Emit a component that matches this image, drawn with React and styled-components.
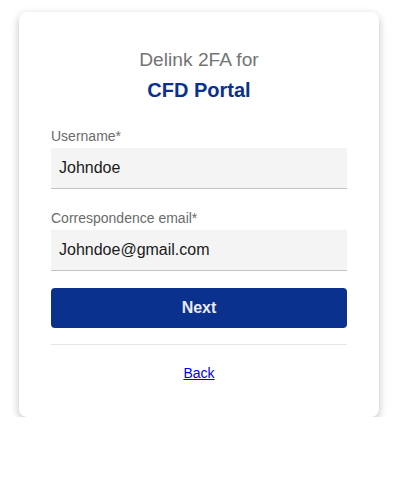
import React from "react"
import styled, { createGlobalStyle } from "styled-components"

const navy = "#0b318f"

const GlobalStyle = createGlobalStyle`
  html, body {
    margin: 0;
    padding: 0;
    background: #ffffff;
    font-family: "Liberation Sans", Arial, sans-serif;
  }
`

const Page = styled.div`
  display: flex;
  justify-content: center;
  padding: 12px 21px 0 19px;
`

const Card = styled.div`
  width: 360px;
  box-sizing: border-box;
  padding: 33px 32px 36px;
  background: #ffffff;
  border-radius: 8px;
  box-shadow: 0 3px 8px rgba(0, 0, 0, 0.25);
`

const Title = styled.h1`
  margin: 0 0 23px;
  text-align: center;
  font-weight: normal;
  font-size: 19.2px;
  line-height: 30px;
  color: #747474;
`

const Brand = styled.span`
  display: block;
  font-size: 20px;
  font-weight: bold;
  color: ${navy};
`

const Field = styled.div`
  display: flex;
  flex-direction: column;
  margin-bottom: ${p => p.$last ? "17px" : "21px"};
`

const Label = styled.label`
  font-size: 14px;
  line-height: 16px;
  color: #6b6b6b;
  margin-bottom: 4px;
`

const Input = styled.input`
  height: 41px;
  box-sizing: border-box;
  border: none;
  border-bottom: 1px solid #c3c3c3;
  background: #f4f4f4;
  padding: 0 8px;
  font-family: inherit;
  font-size: 16px;
  color: #1a1a1a;
  outline: none;
`

const Button = styled.button`
  width: 100%;
  height: 40px;
  border: none;
  border-radius: 4px;
  background: ${navy};
  color: #ebebf2;
  font-family: inherit;
  font-size: 16px;
  font-weight: bold;
  cursor: pointer;
`

const Divider = styled.hr`
  border: none;
  border-top: 1px solid #e6e6e6;
  margin: 16px 0 20px;
`

const Footer = styled.div`
  text-align: center;
  font-size: 14px;
  line-height: 16px;
`

const BackLink = styled.a`
  color: #0000ee;
  text-decoration: underline;
`

export default function App() {
  return (
    <>
      <GlobalStyle />
      <Page>
        <Card>
          <Title>
            Delink 2FA for
            <Brand>CFD Portal</Brand>
          </Title>
          <Field>
            <Label>Username*</Label>
            <Input defaultValue="Johndoe" />
          </Field>
          <Field $last>
            <Label>Correspondence email*</Label>
            <Input defaultValue="Johndoe@gmail.com" />
          </Field>
          <Button>Next</Button>
          <Divider />
          <Footer>
            <BackLink href="#">Back</BackLink>
          </Footer>
        </Card>
      </Page>
    </>
  )
}
